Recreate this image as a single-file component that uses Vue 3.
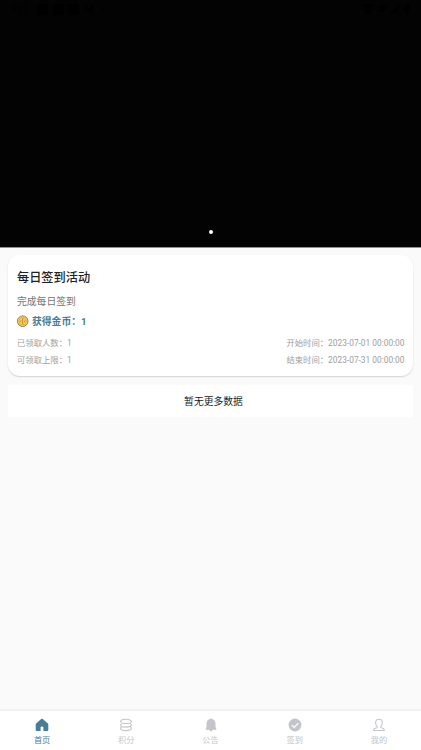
<script setup>
const tabs = [
  { id: 'home', label: '首页' },
  { id: 'points', label: '积分' },
  { id: 'notice', label: '公告' },
  { id: 'sign', label: '签到' },
  { id: 'mine', label: '我的' },
]
const active = 'home'
</script>

<template>
  <div class="page">
    <header class="banner">
      <div class="status">
        <span class="clock">9:21</span>
        <i class="app"></i><i class="app"></i><i class="app"></i>
        <span class="mail">M</span><span class="more">•</span>
        <svg class="signals" width="50" height="12" viewBox="0 0 50 12">
          <path d="M4 1h6v10H4zM1 4v4M13 4v4" stroke="#000" />
          <path d="M16 4q5-4 11 0l-5.500 6z" />
          <path d="M38 1v10H29z" />
          <path d="M44 2h1V1h3v1h1v9h-5z" />
        </svg>
      </div>
      <i class="dot"></i>
    </header>
    <main class="content">
      <article class="card">
        <h1>每日签到活动</h1>
        <p class="desc">完成每日签到</p>
        <div class="reward">
          <svg width="12" height="14" viewBox="0 0 12 14">
            <circle cx="5.700" cy="6.200" r="5.300" fill="#ffce55" stroke="#80683c" stroke-width=".8" />
            <circle cx="5.700" cy="6.200" r="3.600" fill="none" stroke="#d99d32" stroke-width=".6" />
            <path d="M5.700 3.200v6M3 6.200h1.500M7 6.200h1.500" fill="none" stroke="#a67b2e" stroke-width=".8" />
          </svg>
          <span>获得金币：1</span>
        </div>
        <div class="meta"><span>已领取人数：1</span><span>开始时间：2023-07-01 00:00:00</span></div>
        <div class="meta"><span>可领取上限：1</span><span>结束时间：2023-07-31 00:00:00</span></div>
      </article>
      <div class="empty">暂无更多数据</div>
    </main>
    <nav class="tabs">
      <div v-for="tab in tabs" :key="tab.id" class="tab" :class="{ active: tab.id === active }">
        <svg width="14" height="14" viewBox="0 0 14 14">
          <path v-if="tab.id === 'home'" fill="currentColor" d="M7 .8q.4 0 .8.300l5.100 4.300q.4.400.4.900v5.800q0 .8-.8.800H8.400V9.600q0-1-1.400-1t-1.400 1v3.300H1.500q-.8 0-.8-.8V6.300q0-.5.400-.9l5.100-4.300q.4-.3.800-.3z" />
          <g v-else-if="tab.id === 'points'" fill="none" stroke="currentColor" stroke-width="1.100">
            <ellipse cx="7" cy="3.400" rx="5.400" ry="2.100" />
            <path d="M2.600 5.700q-1 .5-1 1.300 0 2.100 5.400 2.100T12.400 7q0-.8-1-1.300M2.600 9.100q-1 .5-1 1.400 0 2.100 5.400 2.100t5.400-2.100q0-.9-1-1.400" />
          </g>
          <path v-else-if="tab.id === 'notice'" fill="currentColor" d="M6.200 1.100a.8.800 0 0 1 1.600 0q3.400.7 3.700 4.600v3.400l.9 1.800v.8H1.600v-.8l.9-1.800V5.700q.3-3.900 3.700-4.600zM5.300 11.700h3.400q-.5 1.700-1.700 1.700t-1.700-1.700z" />
          <g v-else-if="tab.id === 'sign'">
            <circle cx="7" cy="7" r="6.400" fill="currentColor" />
            <path d="M3.800 7.100l2.400 2.300 4.200-4.300" fill="none" stroke="#fff" stroke-width="1.300" />
          </g>
          <path v-else fill="none" stroke="currentColor" stroke-width="1.100" stroke-linejoin="round" d="M7 1.200q3.400 0 3.400 3.500 0 2.200-1.600 3.600-.5 1 .5 1.400l2 .7q1 .4 1 2.100H1.700q0-1.700 1-2.100l2-.7q1-.4.500-1.400Q3.600 6.900 3.600 4.700q0-3.500 3.400-3.500z" />
        </svg>
        <span>{{ tab.label }}</span>
      </div>
    </nav>
  </div>
</template>

<style>
body { margin: 0; }
</style>
<style scoped>
.page { display: flex; flex-direction: column; height: 750px; overflow: hidden; background: #fafafa; font-family: Roboto, "Noto Sans CJK SC", sans-serif; }
.banner { display: flex; flex-direction: column; justify-content: space-between; align-items: center; height: 247px; background: #030303; border-bottom: 1px solid #929292; box-sizing: content-box; flex: none; }
.status { display: flex; align-items: center; width: 100%; height: 18px; padding: 0 10px 0 11px; box-sizing: border-box; color: #000; font-size: 9px; }
.clock { width: 26px; }
.app { width: 11px; height: 11px; margin-right: 4.500px; border-radius: 3px; background: #000; }
.mail { margin-left: 2px; font-weight: 700; }
.more { margin-left: 8px; }
.signals { margin-left: auto; }
.dot { width: 4px; height: 4px; margin: 0 0 13.500px; border-radius: 50%; background: #fff; }
.content { flex: 1; padding: 7px 8px 0; }
.card { height: 121px; padding: 14px 8.500px 0 9px; box-sizing: border-box; background: #fff; border-radius: 12px; box-shadow: 0 1px 1.500px rgba(0, 0, 0, .16); }
h1 { margin: 0; font-size: 12.200px; line-height: 18px; font-weight: 500; color: #212121; }
.desc { margin: 8px 0 0; font-size: 9.800px; line-height: 14px; color: #757575; }
.reward { display: flex; align-items: center; gap: 3px; height: 14px; margin-top: 6px; margin-bottom: 6px; font-size: 9.800px; line-height: 14px; font-weight: 700; color: #477d96; }
.meta { display: flex; justify-content: space-between; height: 17px; font-size: 8.350px; line-height: 17px; color: #9e9e9e; }
.empty { height: 32px; margin-top: 9px; padding-left: 6px; line-height: 33px; text-align: center; font-size: 9.800px; color: #212121; background: #fff; }
.tabs { display: flex; flex: none; height: 40px; box-sizing: border-box; background: #fff; border-top: 1px solid #f0f0f0; box-shadow: 0 -1px 1px rgba(0, 0, 0, .025); }
.tab { flex: 1; display: flex; flex-direction: column; align-items: center; padding-top: 7px; color: #c4c5ca; font-size: 8.200px; line-height: 12px; }
.tab span { margin-top: 2px; }
.active { color: #477d96; }
</style>
